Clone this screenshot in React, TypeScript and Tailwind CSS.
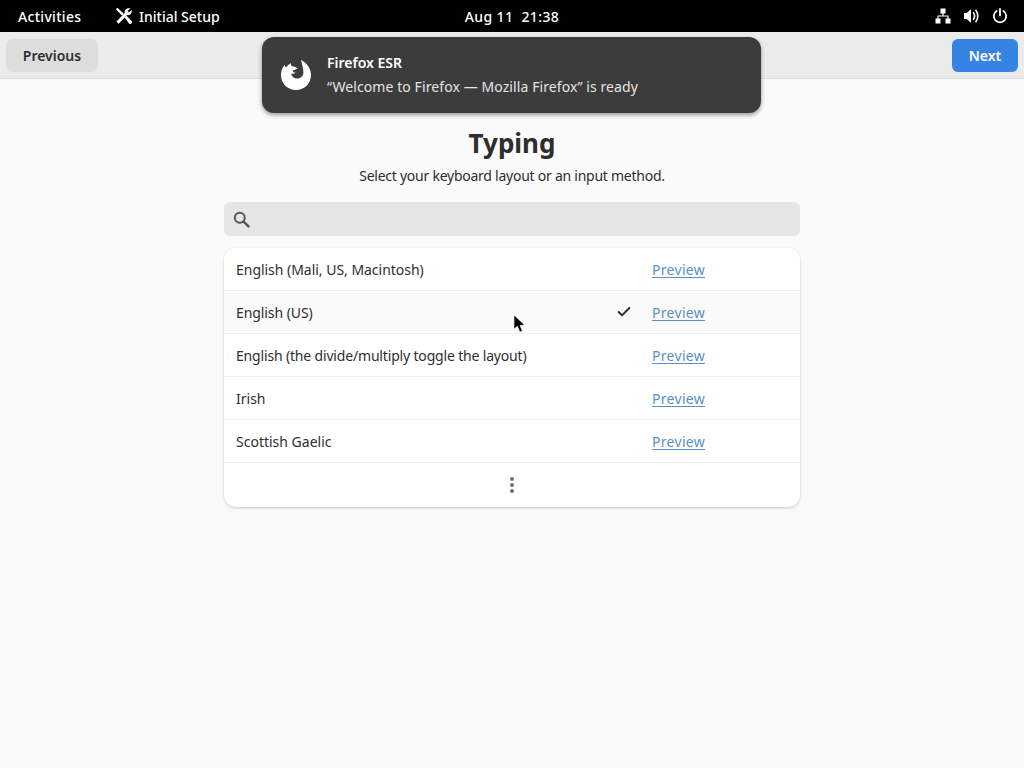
import React from "react";
import { Check } from "lucide-react";

const layouts = [
  { name: "English (Mali, US, Macintosh)", spacing: "tracking-[-0.03px]" },
  { name: "English (US)", spacing: "tracking-[-0.08px]", selected: true },
  { name: "English (the divide/multiply toggle the layout)", spacing: "tracking-[-0.17px]" },
  { name: "Irish", spacing: "tracking-normal" },
  { name: "Scottish Gaelic", spacing: "tracking-normal" },
];

function ToolsIcon() {
  return (
    <svg width="18" height="18" viewBox="0 0 18 18" fill="none" className="text-white">
      <path d="M2.6 15.6 L11.2 6.6" stroke="currentColor" strokeWidth="3" />
      <path d="M9.6 5.6 C9.4 2.6 12.4 0.4 15.4 1.4 L12.8 4 L14 5.6 L16.6 3 C17.6 6 15 8.8 12 8 Z" fill="currentColor" />
      <path d="M0.8 2.2 L2.4 0.8 L8.8 6.8 L7 8.6 Z" fill="currentColor" />
      <path d="M9.6 10.4 L11.4 8.6 L17 14.4 C17.4 16.2 15.8 17.6 14.2 16.8 Z" fill="currentColor" />
    </svg>
  );
}

function NetworkIcon() {
  return (
    <svg width="16" height="16" viewBox="0 0 16 16" fill="#fff">
      <rect x="5.5" y="0.5" width="5" height="5" />
      <rect x="0.5" y="10.5" width="5" height="5" />
      <rect x="10.5" y="10.5" width="5" height="5" />
      <path d="M7.4 5 H8.6 V7.4 H13.6 V11 H12.4 V8.6 H3.6 V11 H2.4 V7.4 H7.4 Z" />
    </svg>
  );
}

function VolumeIcon() {
  return (
    <svg width="17" height="16" viewBox="0 0 17 16" fill="none">
      <path d="M1 5 H3.6 L8 1.2 V14.8 L3.6 11 H1 Z" fill="#fff" />
      <path d="M10.4 4.6 C11.8 6.6 11.8 9.4 10.4 11.4" stroke="#fff" strokeWidth="1.6" strokeLinecap="round" />
      <path d="M13 2.4 C15.4 5.6 15.4 10.4 13 13.6" stroke="#fff" strokeWidth="1.6" strokeLinecap="round" />
    </svg>
  );
}

function PowerIcon() {
  return (
    <svg width="16" height="16" viewBox="0 0 16 16" fill="none" stroke="#fff" strokeWidth="1.8" strokeLinecap="round">
      <path d="M8 1 V7.4" />
      <path d="M4.6 3 A6.2 6.2 0 1 0 11.4 3" />
    </svg>
  );
}

function SearchIcon() {
  return (
    <svg width="17" height="17" viewBox="0 0 17 17" fill="none" stroke="#555555">
      <circle cx="6.8" cy="6.8" r="5" strokeWidth="2" />
      <path d="M10.6 10.6 L15.4 15.4" strokeWidth="2.4" strokeLinecap="round" />
    </svg>
  );
}

function FirefoxIcon() {
  return (
    <svg width="32" height="32" viewBox="0 0 32 32">
      <path
        fill="#fff"
        d="M21 1 C27 4 31 9.5 31 16 C31 24.5 24.5 31 16 31 C7.5 31 1 24.5 1 16 C1 12 2.3 8.6 4.6 6 C5 7.2 5.5 8 6.2 8.6 C7.2 6.8 9 5 11 4 C10.8 5.4 11 6.4 11.8 7.2 C14 7.4 16.4 8 17.6 9.6 C15.6 10.4 14.6 11.4 12.6 11.4 C12.6 12.6 13.8 13.6 15.4 13.8 C14.4 15 12.6 14.8 11.2 14.4 C11.6 17 14 19.6 17.4 19.6 C20.8 19.6 23.4 17 23.4 13.6 C23.4 9 21.8 5 21 1 Z"
      />
    </svg>
  );
}

function Cursor() {
  return (
    <svg width="14" height="20" viewBox="0 0 14 20" className="absolute left-[513px] top-[314px]">
      <path d="M1 1 L1 15 L4.4 12.2 L6.8 18 L9.4 17 L7 11.4 L11.6 11 Z" fill="#000" stroke="#fff" strokeWidth="0.6" />
    </svg>
  );
}

export default function App() {
  return (
    <div
      className="relative flex h-[768px] w-[1024px] flex-col overflow-hidden bg-[#fafafa] text-[#2e2e2e]"
      style={{ fontFamily: '"Noto Sans", sans-serif' }}
    >
      <div className="flex h-8 shrink-0 items-center bg-black text-[14px] font-medium text-white">
        <span className="ml-[18px] w-[97px] tracking-[0.3px]">Activities</span>
        <ToolsIcon />
        <span className="ml-[6px]">Initial Setup</span>
        <span className="ml-[245px] tracking-[0.4px]">Aug 11&nbsp; 21:38</span>
        <div className="ml-auto mr-[16px] flex items-center gap-[12px]">
          <NetworkIcon />
          <VolumeIcon />
          <PowerIcon />
        </div>
      </div>

      <div className="flex h-[47px] shrink-0 items-center justify-between border-b border-[#dcdcdc] bg-[#ebebeb] px-[6px]">
        <button className="h-[33px] w-[92px] rounded-md bg-[#dddddd] text-[14px] font-semibold text-[#2e2e2e]">
          Previous
        </button>
        <button className="h-[33px] w-[66px] rounded-md bg-[#3584e4] text-[14px] font-semibold text-white">
          Next
        </button>
      </div>

      <div className="flex flex-col items-center">
        <h1 className="mt-[46px] text-[26px] leading-[36px] font-bold text-[#2e2e2e]">Typing</h1>
        <p className="mt-[5px] text-[14px] leading-[20px] tracking-[-0.25px]">
          Select your keyboard layout or an input method.
        </p>

        <div className="mt-[16px] flex h-[34px] w-[576px] items-center rounded-md bg-[#e6e6e6] pl-[9px]">
          <SearchIcon />
        </div>

        <div className="mt-[12px] w-[576px] overflow-hidden rounded-xl bg-white shadow-[0_1px_3px_rgba(0,0,0,0.2)]">
          {layouts.map((l) => (
            <div
              key={l.name}
              className={`flex h-[43px] items-center border-b border-[#efefef] pl-3 text-[14px] ${
                l.selected ? "bg-[#fafafa]" : "bg-white"
              }`}
            >
              <span className={`w-[370px] ${l.spacing}`}>{l.name}</span>
              <span className="flex w-[36px] justify-center">
                {l.selected && <Check size={16} strokeWidth={3} className="text-[#2e2e2e]" />}
              </span>
              <a className="ml-[10px] tracking-[0.3px] text-[#5b90c4] underline underline-offset-2">Preview</a>
            </div>
          ))}
          <div className="flex h-[44px] flex-col items-center justify-center gap-[2px]">
            <span className="h-1 w-1 rounded-full bg-[#707070]" />
            <span className="h-1 w-1 rounded-full bg-[#707070]" />
            <span className="h-1 w-1 rounded-full bg-[#707070]" />
          </div>
        </div>
      </div>

      <div className="absolute left-[262px] top-[37px] flex h-[76px] w-[499px] items-center rounded-xl bg-[#3c3c3c] pl-[18px] text-white shadow-[0_2px_4px_rgba(0,0,0,0.4)]">
        <FirefoxIcon />
        <div className="ml-[15px] flex flex-col text-[14px] leading-[24px]">
          <span className="font-semibold">Firefox ESR</span>
          <span className="tracking-[0.09px] text-[#e4e4e4]">“Welcome to Firefox — Mozilla Firefox” is ready</span>
        </div>
      </div>

      <Cursor />
    </div>
  );
}
